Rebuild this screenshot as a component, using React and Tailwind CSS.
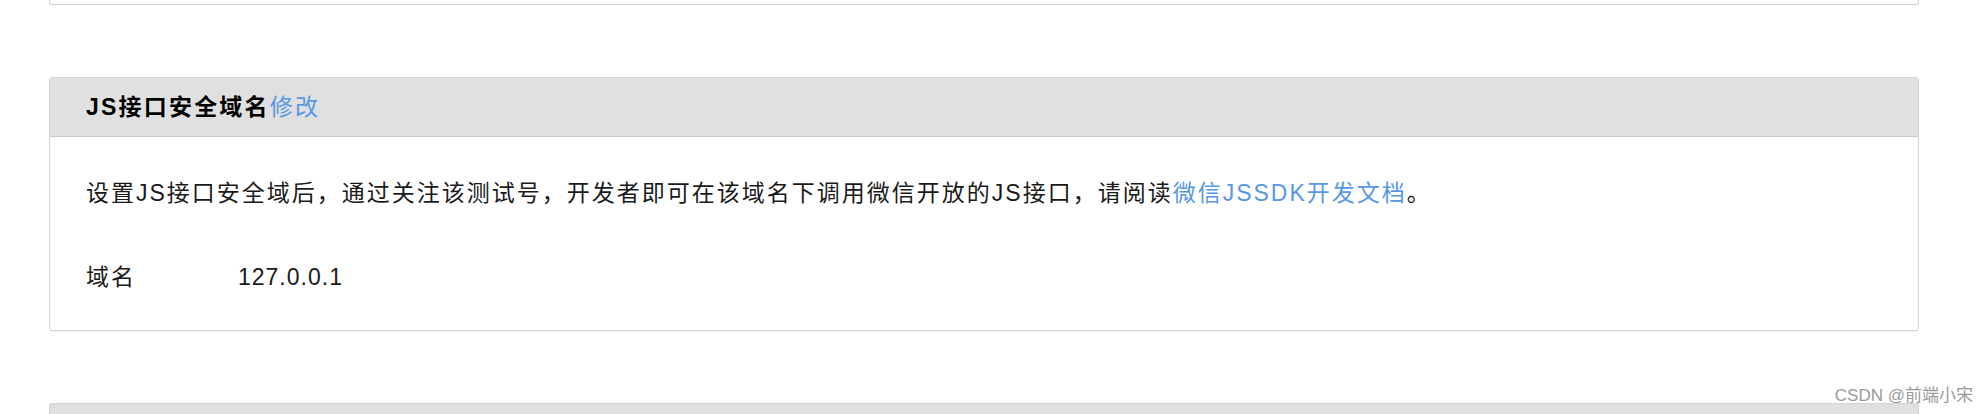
export default function App() {
  const font = { fontFamily: '"Liberation Sans", "Noto Sans CJK SC", sans-serif' };
  return (
    <div
      className="relative h-[414px] w-full overflow-hidden bg-white text-[#1a1a1a]"
      style={font}
    >
      {/* bottom of previous panel */}
      <div className="ml-[49px] h-[5px] w-[1870px] rounded-b-[3px] border-x border-b border-[#d4d4d4]" />

      {/* JS interface safe domain panel */}
      <section className="ml-[49px] mt-[72px] w-[1870px] overflow-hidden rounded-[3px] border border-[#d4d4d4] shadow-[0_1px_1px_rgba(0,0,0,0.04)]">
        <header className="flex h-[59px] items-center border-b border-[#c9c9c9] bg-[#e0e0e0] pl-[36px]">
          <h2 className="text-[23px] font-bold leading-8 tracking-[2.2px] text-black">
            JS接口安全域名<a className="font-normal text-[#5797e4]">修改</a>
          </h2>
        </header>
        <div className="flex h-[193px] flex-col gap-[52px] pl-[36px] pt-[40px]">
          <p className="text-[23px] leading-8 tracking-[2px]">
            设置JS接口安全域后，通过关注该测试号，开发者即可在该域名下调用微信开放的JS接口，请阅读
            <a className="text-[#5797e4]">微信JSSDK开发文档</a>。
          </p>
          <div className="flex text-[23px] leading-8">
            <span className="w-[152px] tracking-[2px]">域名</span>
            <span className="tracking-[1px]">127.0.0.1</span>
          </div>
        </div>
      </section>

      {/* top of next panel */}
      <div className="ml-[49px] mt-[72px] h-[20px] w-[1870px] rounded-t-[3px] border-x border-t border-[#d4d4d4] bg-[#e0e0e0]" />

      {/* watermark */}
      <span className="absolute right-[15px] top-[384px] text-[17px] leading-6 text-[#9a9a9a]">
        CSDN @前端小宋
      </span>
    </div>
  );
}
